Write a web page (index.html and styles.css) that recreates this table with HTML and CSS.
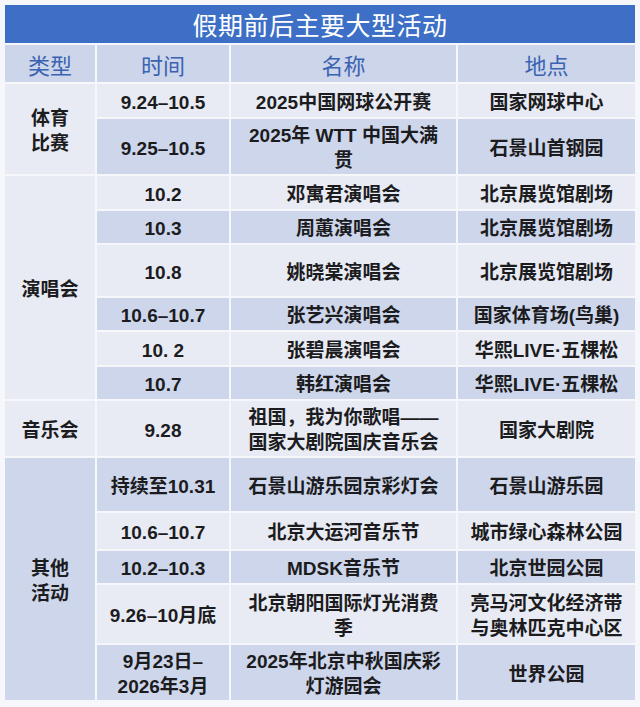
FILE: index.html
```html
<!DOCTYPE html>
<html lang="zh">
<head>
<meta charset="utf-8">
<link rel="stylesheet" href="styles.css">
</head>
<body>
<div class="page">
  <div class="title">假期前后主要大型活动</div>
  <table class="events">
    <colgroup>
      <col class="c1"><col class="c2"><col class="c3"><col class="c4">
    </colgroup>
    <thead>
      <tr class="h37"><th>类型</th><th>时间</th><th>名称</th><th>地点</th></tr>
    </thead>
    <tbody>
      <tr class="h33 lt"><td rowspan="2" class="cat lt">体育<br>比赛</td><td>9.24–10.5</td><td>2025中国网球公开赛</td><td>国家网球中心</td></tr>
      <tr class="h55 dk"><td>9.25–10.5</td><td>2025年 WTT 中国大满<br>贯</td><td>石景山首钢园</td></tr>
      <tr class="h33 lt"><td rowspan="6" class="cat lt">演唱会</td><td>10.2</td><td>邓寓君演唱会</td><td>北京展览馆剧场</td></tr>
      <tr class="h32 dk"><td>10.3</td><td>周蕙演唱会</td><td>北京展览馆剧场</td></tr>
      <tr class="h51 lt"><td>10.8</td><td>姚晓棠演唱会</td><td>北京展览馆剧场</td></tr>
      <tr class="h32 dk"><td>10.6–10.7</td><td>张艺兴演唱会</td><td>国家体育场(鸟巢)</td></tr>
      <tr class="h33 lt"><td>10. 2</td><td>张碧晨演唱会</td><td>华熙LIVE·五棵松</td></tr>
      <tr class="h32 dk"><td>10.7</td><td>韩红演唱会</td><td>华熙LIVE·五棵松</td></tr>
      <tr class="h55 lt"><td class="cat lt">音乐会</td><td>9.28</td><td>祖国，我为你歌唱——<br>国家大剧院国庆音乐会</td><td>国家大剧院</td></tr>
      <tr class="h53 dk"><td rowspan="5" class="cat dk">其他<br>活动</td><td>持续至10.31</td><td>石景山游乐园京彩灯会</td><td>石景山游乐园</td></tr>
      <tr class="h36 lt"><td>10.6–10.7</td><td>北京大运河音乐节</td><td>城市绿心森林公园</td></tr>
      <tr class="h32 dk"><td>10.2–10.3</td><td>MDSK音乐节</td><td>北京世园公园</td></tr>
      <tr class="h58 lt"><td>9.26–10月底</td><td>北京朝阳国际灯光消费<br>季</td><td>亮马河文化经济带<br>与奥林匹克中心区</td></tr>
      <tr class="h55 dk"><td>9月23日–<br>2026年3月</td><td>2025年北京中秋国庆彩<br>灯游园会</td><td>世界公园</td></tr>
    </tbody>
  </table>
</div>
</body>
</html>
```

FILE: styles.css
```css
html, body {
  margin: 0;
  padding: 0;
  background: #f6f7fb;
}
.page {
  width: 640px;
  height: 707px;
  padding: 5px 0 0 3px;
  box-sizing: border-box;
  font-family: "Noto Sans CJK SC", "Noto Sans", sans-serif;
}
.title {
  margin-left: 2px;
  width: 630px;
  height: 38px;
  background: #3c6fc5;
  color: #ffffff;
  font-size: 25px;
  line-height: 38px;
  text-align: center;
  letter-spacing: 0.5px;
}
.events {
  table-layout: fixed;
  width: 634px;
  border-collapse: separate;
  border-spacing: 2px;
}
.c1 { width: 90px; }
.c2 { width: 132px; }
.c3 { width: 225px; }
.c4 { width: 177px; }
.events th {
  background: #ccd5ea;
  color: #3a63b1;
  font-weight: 400;
  font-size: 22px;
  line-height: 28px;
  padding: 0;
  text-align: center;
}
.events td {
  padding: 3px 0 0 0;
  text-align: center;
  vertical-align: middle;
  font-family: "Liberation Sans", "Noto Sans CJK SC", sans-serif;
  font-size: 19px;
  line-height: 25px;
  font-weight: 700;
  color: #1c1c1e;
  white-space: nowrap;
}
.lt td, td.lt { background: #e8ebf4; }
.dk td, td.dk { background: #cdd6eb; }
.h37 { height: 37px; }
.h33 { height: 33px; }
.h32 { height: 32px; }
.h36 { height: 36px; }
.h51 { height: 51px; }
.h53 { height: 53px; }
.h55 { height: 55px; }
.h58 { height: 58px; }
```
